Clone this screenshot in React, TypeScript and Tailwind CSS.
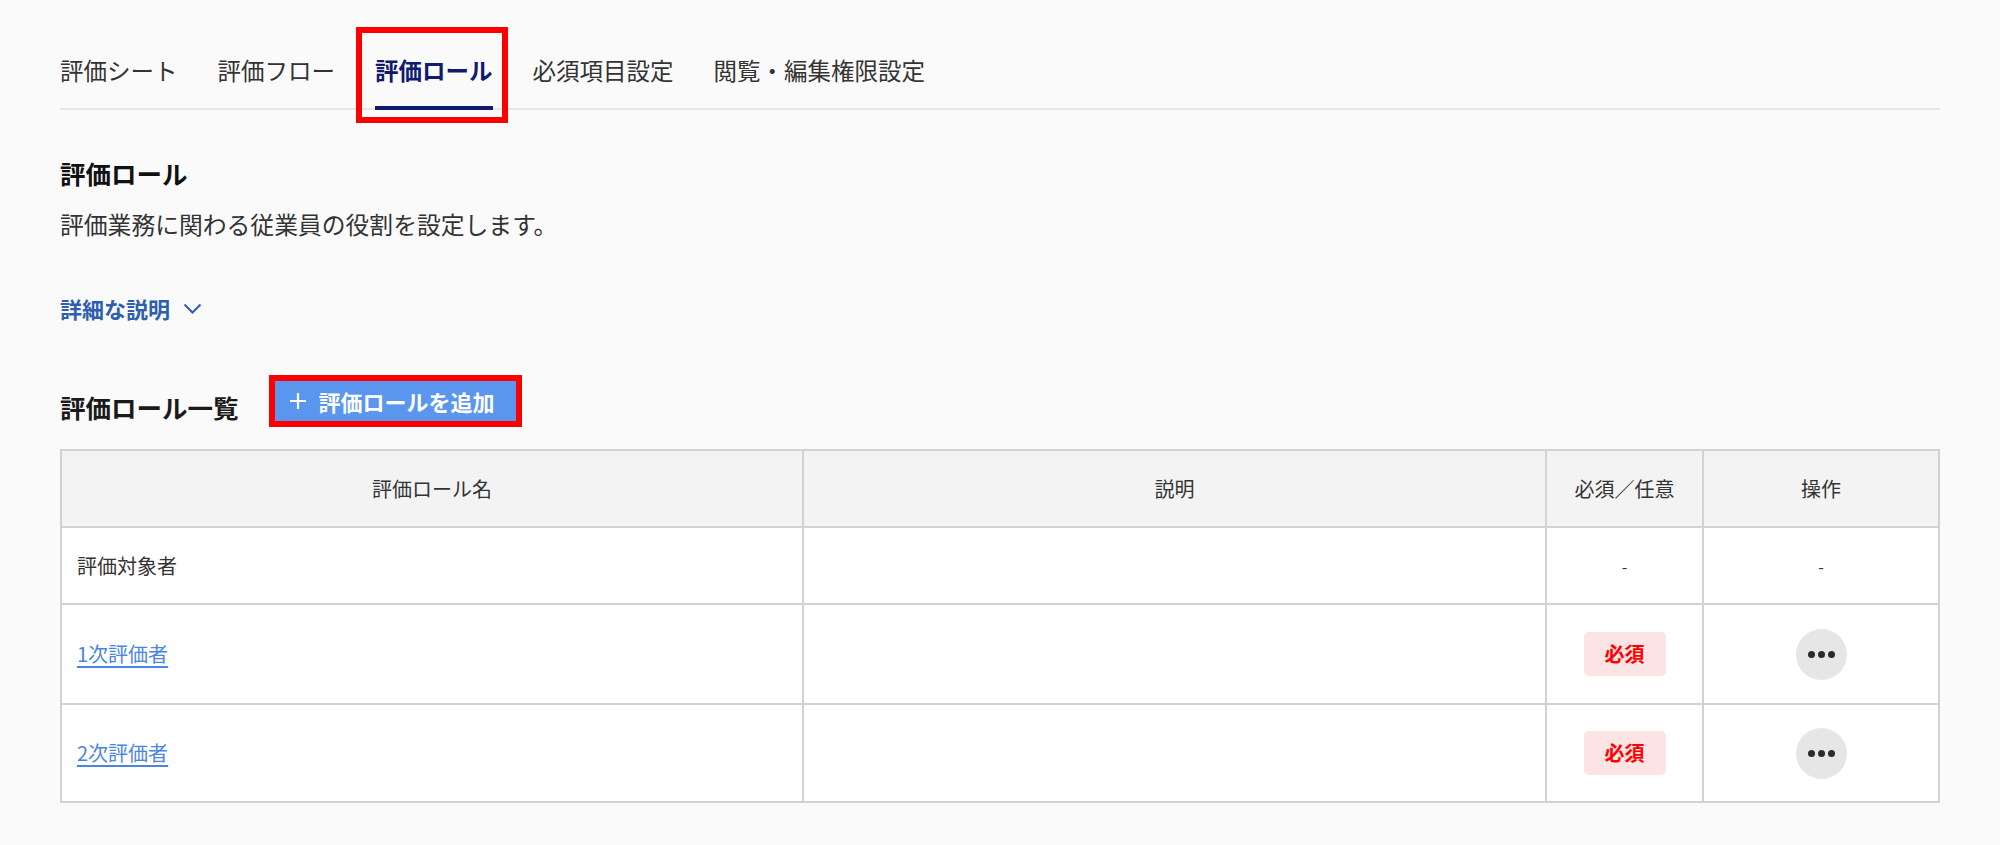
import React from "react";

const font = { fontFamily: '"Noto Sans CJK JP", "Noto Sans", sans-serif' };

function Tabs() {
  const tabs = ["評価シート", "評価フロー", "評価ロール", "必須項目設定", "閲覧・編集権限設定"];
  return (
    <nav className="flex gap-[40px] border-b-2 border-[#e6e6e6]">
      {tabs.map((t) => {
        const active = t === "評価ロール";
        return (
          <div
            key={t}
            className={
              active
                ? "relative pb-[20px] border-b-4 border-[#101a6e] mb-[-2px] text-[23.5px] leading-[32px] font-bold text-[#101a6e]"
                : "pb-[20px] border-b-4 border-transparent mb-[-2px] text-[23.5px] leading-[32px] text-[#333333]"
            }
          >
            {t}
            {active && (
              <span className="pointer-events-none absolute left-[-19px] right-[-15px] top-[-27px] bottom-[-17px] border-[6px] border-[#ff0000]" />
            )}
          </div>
        );
      })}
    </nav>
  );
}

function Dots() {
  return (
    <div className="mx-auto flex h-[51px] w-[51px] items-center justify-center gap-[3px] rounded-full bg-[#e6e6e6]">
      <span className="h-[7px] w-[7px] rounded-full bg-[#2b2b2b]" />
      <span className="h-[7px] w-[7px] rounded-full bg-[#2b2b2b]" />
      <span className="h-[7px] w-[7px] rounded-full bg-[#2b2b2b]" />
    </div>
  );
}

function Badge() {
  return (
    <div className="mx-auto flex h-[44px] w-[82px] items-center justify-center rounded-[5px] bg-[#fce4e4] text-[20px] font-bold text-[#ff0000]">
      必須
    </div>
  );
}

export default function App() {
  const cell = "border-2 border-[#d2d2d2]";
  return (
    <div style={font} className="min-h-[845px] w-full bg-[#fafafa] px-[60px] pt-[54px] text-[#333333]">
      <Tabs />

      <h2 className="mt-[46px] text-[25.5px] leading-[34px] font-bold text-[#111111]">評価ロール</h2>
      <p className="mt-[18px] text-[23.8px] leading-[32px] text-[#333333]">評価業務に関わる従業員の役割を設定します。</p>

      <div className="mt-[53px] flex items-center gap-[13px] text-[22px] leading-[30px] font-bold text-[#2d5fae]">
        <span>詳細な説明</span>
        <svg width="19" height="11" viewBox="0 0 19 11" fill="none">
          <polyline points="1.5,1.5 9.5,9.5 17.5,1.5" stroke="#2d5fae" strokeWidth="2" />
        </svg>
      </div>

      <div className="mt-[52px] flex items-start gap-[30px]">
        <h3 className="mt-[15px] text-[25.5px] leading-[34px] font-bold text-[#1a1a1a]">評価ロール一覧</h3>
        <div className="border-[6px] border-[#ff0000]">
          <button className="flex h-[40px] w-[241px] items-center gap-[12px] bg-[#5a96ed] pl-[14px] text-[22px] font-bold text-white">
            <svg width="18" height="18" viewBox="0 0 18 18">
              <path d="M9 1v16M1 9h16" stroke="white" strokeWidth="2.2" />
            </svg>
            <span>評価ロールを追加</span>
          </button>
        </div>
      </div>

      <table className="mt-[22px] w-full table-fixed border-collapse text-[20px]">
        <colgroup>
          <col className="w-[742px]" />
          <col className="w-[743px]" />
          <col className="w-[157px]" />
          <col />
        </colgroup>
        <thead>
          <tr className="h-[77px] bg-[#f3f3f3]">
            <th className={`${cell} font-normal text-[#333333]`}>評価ロール名</th>
            <th className={`${cell} font-normal text-[#333333]`}>説明</th>
            <th className={`${cell} font-normal text-[#333333]`}>必須／任意</th>
            <th className={`${cell} font-normal text-[#333333]`}>操作</th>
          </tr>
        </thead>
        <tbody className="bg-white">
          <tr className="h-[77px]">
            <td className={`${cell} pl-[15px]`}>評価対象者</td>
            <td className={cell}></td>
            <td className={`${cell} text-center text-[16px]`}>-</td>
            <td className={`${cell} text-center text-[16px]`}>-</td>
          </tr>
          <tr className="h-[100px]">
            <td className={`${cell} pl-[15px]`}>
              <a className="text-[#4a86e0] underline underline-offset-4">1次評価者</a>
            </td>
            <td className={cell}></td>
            <td className={cell}>
              <Badge />
            </td>
            <td className={cell}>
              <Dots />
            </td>
          </tr>
          <tr className="h-[98px]">
            <td className={`${cell} pl-[15px]`}>
              <a className="text-[#4a86e0] underline underline-offset-4">2次評価者</a>
            </td>
            <td className={cell}></td>
            <td className={cell}>
              <Badge />
            </td>
            <td className={cell}>
              <Dots />
            </td>
          </tr>
        </tbody>
      </table>
    </div>
  );
}
